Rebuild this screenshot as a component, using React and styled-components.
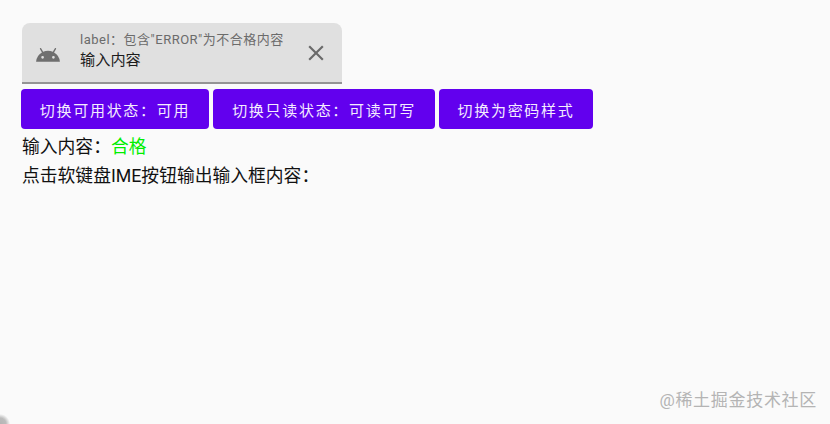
import React from 'react'
import styled, { createGlobalStyle } from 'styled-components'

const Global = createGlobalStyle`
  html, body {
    margin: 0;
    height: 100%;
    background: #fafafa;
    overflow: hidden;
  }
  body {
    font-family: Roboto, "Noto Sans CJK SC", sans-serif;
  }
`

const Screen = styled.div`
  position: relative;
  width: 830px;
  height: 424px;
  box-sizing: border-box;
  padding: 23px 0 0 22px;
  overflow: hidden;
  background: #fafafa;
  color: #000;
  &::after {
    content: '';
    position: absolute;
    left: 0;
    bottom: 0;
    width: 12px;
    height: 12px;
    background: radial-gradient(circle at 0 100%, #b4b4b4 0, #bcbcbc 6px, #fafafa 10px);
  }
`

const Field = styled.div`
  width: 320px;
  height: 61px;
  box-sizing: border-box;
  display: flex;
  align-items: center;
  background: #e0e0e0;
  border-radius: 8px 8px 0 0;
  border-bottom: 2px solid #949494;
`

const LeadIcon = styled.svg`
  width: 26px;
  height: 26px;
  margin-left: 13px;
  flex: none;
  fill: #6f6f6f;
`

const FieldText = styled.div`
  flex: 1;
  margin-left: 19px;
  display: flex;
  flex-direction: column;
  margin-top: -2px;
`

const FieldLabel = styled.div`
  font-size: 13px;
  line-height: 18px;
  color: #6b6b6b;
  letter-spacing: 0.5px;
`

const FieldValue = styled.div`
  font-size: 15.2px;
  line-height: 23px;
  color: #1c1c1c;
`

const CloseIcon = styled.svg`
  width: 26px;
  height: 26px;
  margin-right: 13px;
  flex: none;
  fill: #6a6a6a;
`

const Buttons = styled.div`
  display: flex;
  gap: 4px;
  margin: 5px 0 0 -1px;
`

const Button = styled.button`
  width: ${p => p.$w}px;
  height: 40px;
  padding: 0;
  border: none;
  border-radius: 4px;
  background: #6200ee;
  color: #f4ecfe;
  font-family: inherit;
  font-size: 15px;
  letter-spacing: 1.7px;
  text-align: center;
`

const Line = styled.div`
  font-size: 17.8px;
  line-height: 24px;
  color: #111;
`

const FirstLine = styled(Line)`
  margin-top: 6px;
`

const SecondLine = styled(Line)`
  margin-top: 5px;
`

const Pass = styled.span`
  color: #00ee00;
`

const Watermark = styled.div`
  position: absolute;
  right: 13px;
  bottom: 13px;
  font-size: 17px;
  line-height: 22px;
  letter-spacing: 0.7px;
  color: #b4b4b4;
`

export default function App() {
  return (
    <Screen>
      <Global />
      <Field>
        <LeadIcon viewBox="0 0 24 24">
          <path d="M17.6,11.48 L19.44,8.3a0.63,0.63 0 0 0 -1.09,-0.63l-1.88,3.24a11.43,11.43 0 0 0 -8.94,0L5.65,7.67a0.63,0.63 0 0 0 -1.09,0.63L6.4,11.48A10.81,10.81 0 0 0 1,20L23,20A10.81,10.81 0 0 0 17.6,11.48ZM7,17.25A1.25,1.25 0 1 1 8.25,16 1.25,1.25 0 0 1 7,17.25ZM17,17.25A1.25,1.25 0 1 1 18.25,16 1.25,1.25 0 0 1 17,17.25Z" />
        </LeadIcon>
        <FieldText>
          <FieldLabel>label：包含"ERROR"为不合格内容</FieldLabel>
          <FieldValue>输入内容</FieldValue>
        </FieldText>
        <CloseIcon viewBox="0 0 24 24">
          <path d="M19 6.41L17.59 5 12 10.59 6.41 5 5 6.41 10.59 12 5 17.59 6.41 19 12 13.41 17.59 19 19 17.59 13.41 12z" />
        </CloseIcon>
      </Field>
      <Buttons>
        <Button $w={188}>切换可用状态：可用</Button>
        <Button $w={222}>切换只读状态：可读可写</Button>
        <Button $w={154}>切换为密码样式</Button>
      </Buttons>
      <FirstLine>输入内容：<Pass>合格</Pass></FirstLine>
      <SecondLine>点击软键盘IME按钮输出输入框内容：</SecondLine>
      <Watermark>@稀土掘金技术社区</Watermark>
    </Screen>
  )
}
